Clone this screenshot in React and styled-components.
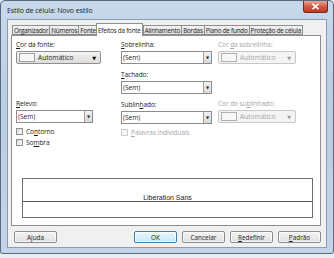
import React from "react";
import styled, { createGlobalStyle } from "styled-components";

const GlobalStyle = createGlobalStyle`
  html, body {
    margin: 0;
    padding: 0;
    background: #e9edf2;
  }
  body {
    font-family: "Open Sans", "Noto Sans", "DejaVu Sans", sans-serif;
    font-size: 7px;
    color: #1e1e1e;
  }
`;

const Window = styled.div`
  width: 334px;
  height: 254px;
  box-sizing: border-box;
  display: flex;
  flex-direction: column;
  background: linear-gradient(#c9d9ec, #b9cde4 40%, #c3d4e8);
  border: 1px solid #59697d;
  border-radius: 5px 5px 3px 3px;
  padding: 0 6px 5px 6px;
  box-shadow: 0 2px 4px rgba(0, 0, 0, 0.35);
`;

const TitleBar = styled.div`
  height: 18px;
  display: flex;
  align-items: flex-start;
  justify-content: space-between;
`;

const Title = styled.span`
  margin-top: 5px;
  font-size: 7px;
  color: #1b1b1b;
  letter-spacing: -0.1px;
`;

const CloseButton = styled.div`
  width: 25px;
  height: 12px;
  margin-right: -1px;
  border: 1px solid #6f2a20;
  border-top: none;
  border-radius: 0 0 3px 3px;
  background: linear-gradient(#e9a698, #d25c43 50%, #c0391f);
  display: flex;
  align-items: center;
  justify-content: center;
  box-sizing: border-box;
`;

const Client = styled.div`
  flex: 1;
  background: #f0f0f0;
  border: 1px solid #8c9cb0;
  display: flex;
  flex-direction: column;
  padding: 3px 5px 0 3px;
`;

const TabBar = styled.div`
  display: flex;
  align-items: flex-end;
  height: 12px;
  padding-left: 1px;
`;

const Tab = styled.div`
  height: ${(p) => (p.$active ? "13px" : "10px")};
  box-sizing: border-box;
  padding: 0 1px;
  border: 1px solid #8e8f8f;
  border-bottom: ${(p) => (p.$active ? "none" : "1px solid #8e8f8f")};
  margin-right: ${(p) => (p.$active ? "0" : "-1px")};
  margin-left: ${(p) => (p.$active ? "-1px" : "0")};
  margin-bottom: ${(p) => (p.$active ? "-1px" : "0")};
  background: ${(p) =>
    p.$active ? "#ffffff" : "linear-gradient(#f3f3f3, #e6e6e6 50%, #dcdcdc)"};
  position: relative;
  z-index: ${(p) => (p.$active ? 2 : 1)};
  display: flex;
  align-items: center;
  font-size: 6.3px;
  letter-spacing: -0.2px;
  white-space: nowrap;
`;

const Panel = styled.div`
  position: relative;
  z-index: 1;
  height: 191px;
  box-sizing: border-box;
  background: #fff;
  border: 1px solid #8e8f8f;
  display: flex;
  flex-direction: column;
  padding: 4px 0 7px 4px;
`;

const Grid = styled.div`
  display: grid;
  grid-template-columns: 105px 97px 80px;
`;

const Column = styled.div`
  display: flex;
  flex-direction: column;
`;

const Label = styled.div`
  height: 9px;
  margin-top: ${(p) => p.$top || 0}px;
  line-height: 9px;
  font-size: 6.6px;
  letter-spacing: -0.1px;
  color: ${(p) => (p.$disabled ? "#a6a6a6" : "#1e1e1e")};
  u {
    text-decoration: underline;
    text-underline-offset: 1px;
  }
`;

const ColorButton = styled.div`
  width: ${(p) => p.$w}px;
  height: 13px;
  box-sizing: border-box;
  margin-top: 2px;
  border: 1px solid ${(p) => (p.$disabled ? "#c8c8c8" : "#8f8f8f")};
  border-radius: 2px;
  background: ${(p) =>
    p.$disabled ? "#f4f4f4" : "linear-gradient(#f6f6f6, #e8e8e8 50%, #dcdcdc)"};
  display: flex;
  align-items: center;
  padding: 0 4px 0 2px;
  color: ${(p) => (p.$disabled ? "#a6a6a6" : "#1e1e1e")};
`;

const Swatch = styled.span`
  width: 14px;
  height: 7px;
  border: 1px solid ${(p) => (p.$disabled ? "#b0b0b0" : "#a0a0a0")};
  background: #f7f7f7;
  margin-right: 3px;
`;

const Grow = styled.span`
  flex: 1;
  font-size: 6.6px;
`;

const Arrow = styled.span`
  font-size: 5px;
  color: ${(p) => (p.$disabled ? "#9a9a9a" : "#000")};
`;

const Select = styled.div`
  width: ${(p) => p.$w}px;
  height: 13px;
  box-sizing: border-box;
  margin-top: 2px;
  border: 1px solid #8c8c8c;
  background: #fff;
  display: flex;
  align-items: center;
  padding-left: 1px;
  font-size: 6.4px;
`;

const DropButton = styled.span`
  width: 8px;
  height: 11px;
  box-sizing: border-box;
  border-left: 1px solid #a0a0a0;
  background: linear-gradient(#f2f2f2, #d9d9d9);
  display: flex;
  align-items: center;
  justify-content: center;
  font-size: 4px;
`;

const CheckRow = styled.div`
  display: flex;
  align-items: center;
  height: 11px;
  margin-top: ${(p) => p.$top || 0}px;
  color: ${(p) => (p.$disabled ? "#a6a6a6" : "#1e1e1e")};
  font-size: 6.6px;
  letter-spacing: -0.1px;
`;

const Box = styled.span`
  width: 7px;
  height: 7px;
  box-sizing: border-box;
  border: 1px solid ${(p) => (p.$disabled ? "#cfcfcf" : "#8f8f8f")};
  background: ${(p) =>
    p.$disabled ? "#f6f6f6" : "linear-gradient(135deg, #dcdcdc, #fbfbfb)"};
  margin-right: 3px;
`;

const Preview = styled.div`
  margin-top: auto;
  margin-left: 6px;
  width: 291px;
  height: 40px;
  box-sizing: border-box;
  border: 1px solid #6e6e6e;
  display: flex;
  flex-direction: column;
`;

const PreviewTop = styled.div`
  height: 22px;
  border-bottom: 1px solid #5c5c5c;
  display: flex;
  align-items: flex-end;
  justify-content: center;
  font-family: "Liberation Sans", Arial, sans-serif;
  font-size: 7px;
  line-height: 7px;
  color: #222;
`;

const ButtonRow = styled.div`
  display: flex;
  align-items: center;
  padding: 5px 0 0 3px;
  gap: 5px;
`;

const Button = styled.div`
  width: 43px;
  height: 12px;
  box-sizing: border-box;
  border: 1px solid ${(p) => (p.$default ? "#3c7fb1" : "#8d8d8d")};
  border-radius: 2px;
  background: ${(p) =>
    p.$default
      ? "linear-gradient(#eaf6fd, #d9effa 50%, #bee6fd)"
      : "linear-gradient(#f2f2f2, #ebebeb 50%, #dddddd)"};
  box-shadow: inset 0 0 0 1px rgba(255, 255, 255, 0.7);
  display: flex;
  align-items: center;
  justify-content: center;
  font-size: 6.4px;
  margin-left: ${(p) => p.$push || 0}px;
`;

const ColorField = ({ w, disabled }) => (
  <ColorButton $w={w} $disabled={disabled}>
    <Swatch $disabled={disabled} />
    <Grow>Automático</Grow>
    <Arrow $disabled={disabled}>▼</Arrow>
  </ColorButton>
);

const SelectField = ({ w }) => (
  <Select $w={w}>
    <Grow>(Sem)</Grow>
    <DropButton>▼</DropButton>
  </Select>
);

const tabs = [
  "Organizador",
  "Números",
  "Fonte",
  "Efeitos da fonte",
  "Alinhamento",
  "Bordas",
  "Plano de fundo",
  "Proteção de célula",
];

export default function App() {
  return (
    <>
      <GlobalStyle />
      <Window>
        <TitleBar>
          <Title>Estilo de célula: Novo estilo</Title>
          <CloseButton>
            <svg width="9" height="7" viewBox="0 0 9 7">
              <path d="M1.5 0.8 L7.5 6.2 M7.5 0.8 L1.5 6.2" stroke="#fff" strokeWidth="1.6" />
            </svg>
          </CloseButton>
        </TitleBar>
        <Client>
          <TabBar>
            {tabs.map((t) => (
              <Tab key={t} $active={t === "Efeitos da fonte"}>
                {t}
              </Tab>
            ))}
          </TabBar>
          <Panel>
            <Grid>
              <Column>
                <Label>
                  <u>C</u>or da fonte:
                </Label>
                <ColorField w={85} />
                <Label $top={35}>
                  <u>R</u>elevo:
                </Label>
                <SelectField w={77} />
                <CheckRow $top={3}>
                  <Box />
                  Co<u>n</u>torno
                </CheckRow>
                <CheckRow>
                  <Box />
                  So<u>m</u>bra
                </CheckRow>
              </Column>
              <Column>
                <Label>
                  <u>S</u>obrelinha:
                </Label>
                <SelectField w={91} />
                <Label $top={6}>
                  <u>T</u>achado:
                </Label>
                <SelectField w={91} />
                <Label $top={6}>
                  Sublin<u>h</u>ado:
                </Label>
                <SelectField w={91} />
                <CheckRow $top={3} $disabled>
                  <Box $disabled />
                  <span>
                    <u>P</u>alavras individuais
                  </span>
                </CheckRow>
              </Column>
              <Column>
                <Label $disabled>
                  Cor <u>d</u>a sobrelinha:
                </Label>
                <ColorField w={78} disabled />
                <Label $top={35} $disabled>
                  Cor do su<u>b</u>linhado:
                </Label>
                <ColorField w={78} disabled />
              </Column>
            </Grid>
            <Preview>
              <PreviewTop>Liberation Sans</PreviewTop>
            </Preview>
          </Panel>
          <ButtonRow>
            <Button>
              A<u>j</u>uda
            </Button>
            <Button $default $push={72}>
              OK
            </Button>
            <Button>Cancelar</Button>
            <Button>
              <u>R</u>edefinir
            </Button>
            <Button>
              <u>P</u>adrão
            </Button>
          </ButtonRow>
        </Client>
      </Window>
    </>
  );
}
